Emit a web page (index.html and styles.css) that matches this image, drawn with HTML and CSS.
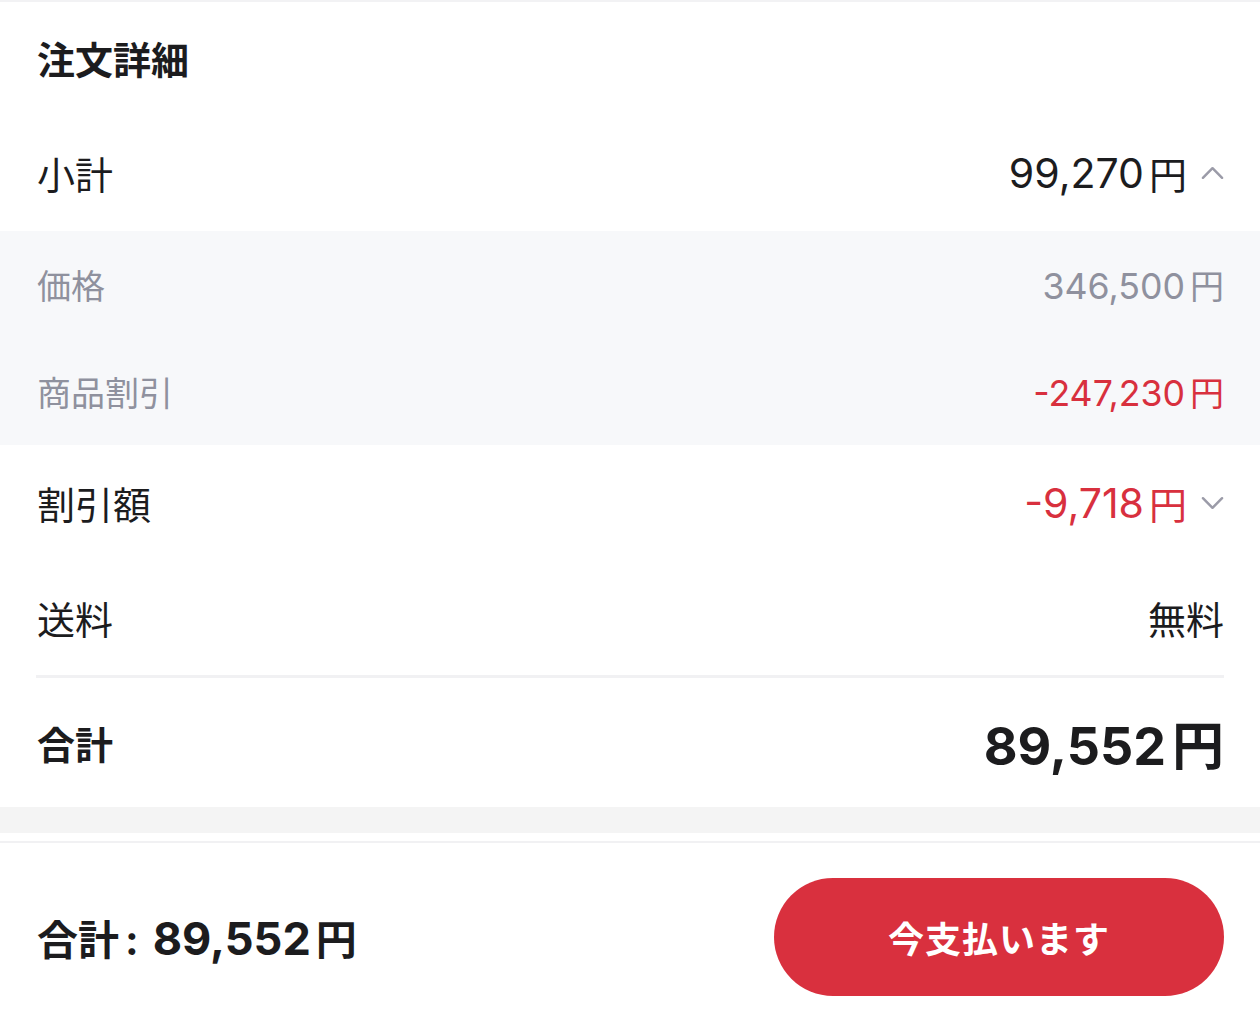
FILE: index.html
```html
<!DOCTYPE html>
<html lang="ja">
<head>
    <meta charset="UTF-8">
    <meta name="viewport" content="width=device-width, initial-scale=1.0">
    <title>注文詳細</title>
    <link rel="stylesheet" href="styles.css">
</head>
<body>

    <!-- 注文詳細 -->
    <div class="summary">
        <h2 class="title">注文詳細</h2>

        <div class="row row-sub">
            <span>小計</span>
            <span class="value"><span class="num">99,270</span>円
                <svg class="chev" viewBox="0 0 24 14"><path d="M2 12 L12 2 L22 12"/></svg>
            </span>
        </div>

        <div class="details">
            <div class="row row-detail">
                <span>価格</span>
                <span><span class="num">346,500</span>円</span>
            </div>
            <div class="row row-detail">
                <span>商品割引</span>
                <span class="red"><span class="num">-247,230</span>円</span>
            </div>
        </div>

        <div class="row row-main">
            <span>割引額</span>
            <span class="value red"><span class="num">-9,718</span>円
                <svg class="chev" viewBox="0 0 24 14"><path d="M2 2 L12 12 L22 2"/></svg>
            </span>
        </div>
        <div class="row row-main">
            <span>送料</span>
            <span>無料</span>
        </div>

        <div class="line"></div>

        <div class="row row-total">
            <span>合計</span>
            <span class="total-price"><span class="num">89,552</span>円</span>
        </div>
    </div>

    <div class="band"></div>

    <!-- 下のバー -->
    <div class="footer">
        <div class="footer-total">合計<span class="colon">:</span><span class="num">89,552</span>円</div>
        <button class="pay">今支払います</button>
    </div>

</body>
</html>
```

FILE: styles.css
```css
* {
    margin: 0;
    padding: 0;
    box-sizing: border-box;
}
body {
    font-family: "Noto Sans CJK JP", "Noto Sans", sans-serif;
    background: white;
    color: #1c1c1e;
    border-top: 2px solid #f2f2f4;
}
.num {
    font-family: Inter, "Noto Sans", sans-serif;
    font-size: 1.08em;
    margin-right: 5px;
}
.title {
    height: 118px;
    padding: 0 37px 8px;
    display: flex;
    align-items: center;
    font-size: 38px;
    font-weight: bold;
}
.row {
    display: flex;
    justify-content: space-between;
    align-items: center;
    padding: 0 36px 0 37px;
}
.row-sub {
    height: 111px;
    padding-bottom: 6px;
    font-size: 38px;
}
.value {
    display: flex;
    align-items: center;
}
.chev {
    width: 23px;
    height: 14px;
    margin-left: 14px;
    fill: none;
    stroke: #9b9ba8;
    stroke-width: 2.6;
    stroke-linecap: round;
    stroke-linejoin: round;
}
.details {
    background: #f7f8fa;
}
.row-detail {
    height: 107px;
    font-size: 34px;
    color: #8f919e;
}
.row-detail .num {
    font-size: 1.05em;
}
.red {
    color: #d8303e;
}
.row-main {
    height: 115px;
    font-size: 38px;
}
.line {
    height: 3px;
    margin: 0 36px;
    background: #f1f1f3;
}
.row-total {
    height: 129px;
    font-size: 38px;
    font-weight: bold;
}
.total-price {
    font-size: 52px;
    font-weight: bold;
}
.total-price .num {
    font-size: 1em;
    margin-right: 6px;
}
.band {
    height: 34px;
    background: #f4f4f4;
    border-bottom: 8px solid white;
}
.footer {
    border-top: 2px solid #f1f1f3;
    height: 190px;
    display: flex;
    justify-content: space-between;
    align-items: center;
    padding: 0 36px 0 37px;
}
.footer-total {
    font-size: 41px;
    font-weight: bold;
}
.colon {
    font-family: Inter, sans-serif;
    margin: 0 14px 0 6px;
}
.footer-total .num {
    font-size: 1.1em;
}
.pay {
    width: 450px;
    height: 118px;
    border: none;
    border-radius: 59px;
    background: #d9303e;
    color: white;
    font-family: inherit;
    font-size: 36px;
    font-weight: bold;
    letter-spacing: 1px;
    cursor: pointer;
}
```
